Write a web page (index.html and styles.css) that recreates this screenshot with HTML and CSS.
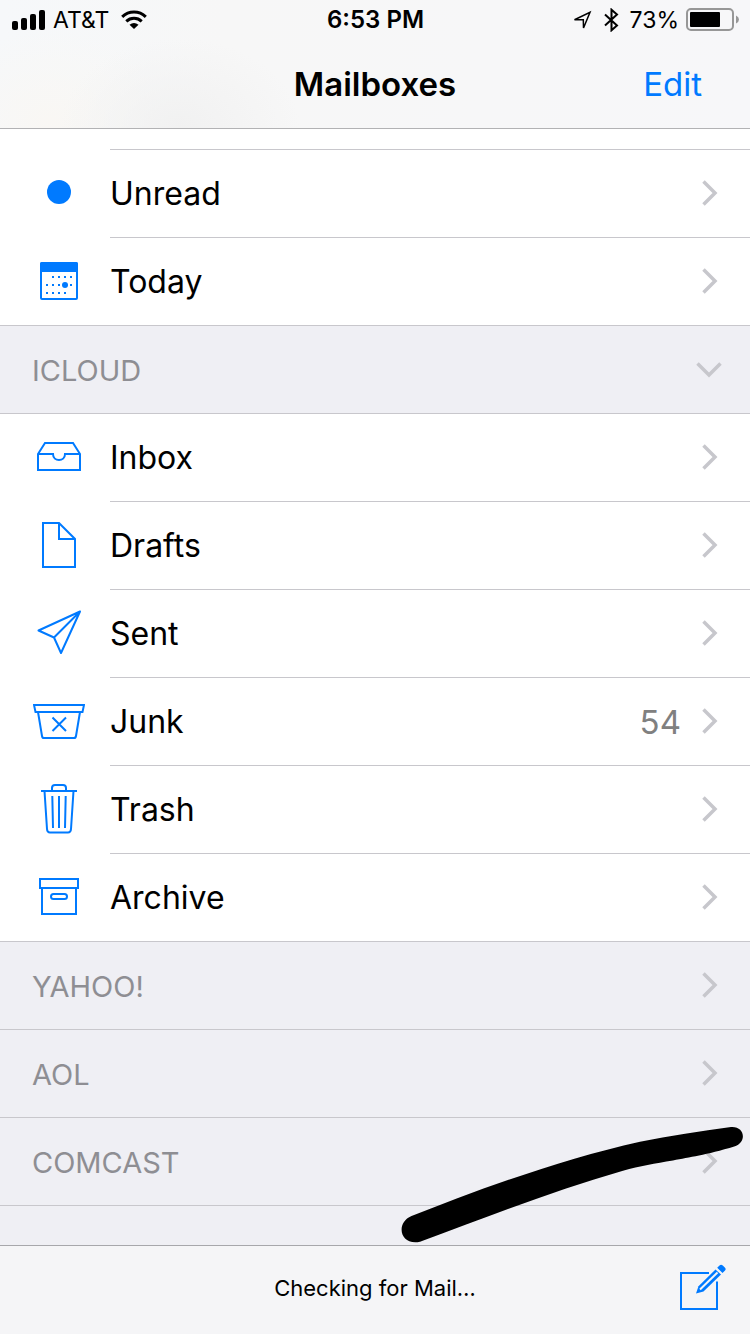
FILE: index.html
```html
<!DOCTYPE html>
<html lang="en">
<head>
<meta charset="utf-8">
<meta name="viewport" content="width=device-width, initial-scale=1">
<title>Mailboxes</title>
<link rel="stylesheet" href="styles.css">
</head>
<body>
<svg class="defs" aria-hidden="true">
  <symbol id="chevron" viewBox="0 0 26 26"><path d="M7.500 1.500 19 13 7.500 24.500"/></symbol>
</svg>
<header class="top">
  <div class="status">
    <div class="status-left">
      <svg class="signal" width="34" height="20" viewBox="0 0 34 20" role="img" aria-label="Signal"><rect y="11" width="6" height="9" rx="2"/><rect x="9" y="8" width="6" height="12" rx="2"/><rect x="18" y="4" width="6" height="16" rx="2"/><rect x="27" width="6" height="20" rx="2"/></svg>
      <span class="carrier">AT&amp;T</span>
      <svg class="wifi" width="26" height="20" viewBox="0 0 26 20" role="img" aria-label="Wi-Fi"><path class="arc" d="M1.200 6.800a17 17 0 0 1 23.600 0M5.300 11.300a11.200 11.200 0 0 1 15.400 0"/><path d="M8.500 14.800Q13 11.300 17.500 14.800L13 19z"/></svg>
    </div>
    <time class="clock">6:53 PM</time>
    <div class="status-right">
      <svg width="20" height="22" viewBox="0 0 20 22" role="img" aria-label="Location"><path class="line fine" d="M2.500 10.700 18 3.300 11.500 19 11.300 10.700z"/></svg>
      <svg class="bluetooth" width="16" height="24" viewBox="0 0 16 24" role="img" aria-label="Bluetooth"><path class="line" d="m2 6.500 12 11-5.500 4.800V1.700L14 6.500l-12 11"/></svg>
      <span>73%</span>
      <svg class="battery" width="53" height="24" viewBox="0 0 53 24" role="img" aria-label="Battery"><rect class="shell" x="1" y="1" width="46" height="21" rx="4"/><rect x="4" y="4" width="30" height="15" rx="1"/><path class="nub" d="M50 7.500q3 1.500 3 4t-3 4z"/></svg>
    </div>
  </div>
  <div class="nav">
    <h1 class="title">Mailboxes</h1>
    <button class="edit" type="button">Edit</button>
  </div>
</header>
<main class="list">
  <div class="peek"></div>
  <a class="row" href="#unread">
    <svg class="icon" viewBox="0 0 52 51"><circle class="solid" cx="26" cy="24" r="12"/></svg>
    <span class="cell"><span class="label">Unread</span><svg class="chevron"><use href="#chevron"/></svg></span>
  </a>
  <a class="row" href="#today">
    <svg class="icon" viewBox="0 0 52 51"><rect x="8" y="7" width="36" height="36" rx="1"/><path class="solid" d="M7 8q0-2 2-2h34q2 0 2 2v9.500q-1-1.500-2-1.500H9q-1 0-2 1.500z"/><path class="dots" d="M19 21h20M13 29h26M13 37h20"/><circle class="solid" cx="32" cy="29" r="3"/></svg>
    <span class="cell"><span class="label">Today</span><svg class="chevron"><use href="#chevron"/></svg></span>
  </a>
  <button class="section" type="button" aria-expanded="true"><span class="name">ICLOUD</span><svg class="chevron down"><use href="#chevron"/></svg></button>
  <a class="row first" href="#inbox">
    <svg class="icon" viewBox="0 0 52 51"><path d="M5 22 12 11h28l7 11v16H5z"/><path d="M5 22h15c0 8 12 8 12 0h15"/></svg>
    <span class="cell"><span class="label">Inbox</span><svg class="chevron"><use href="#chevron"/></svg></span>
  </a>
  <a class="row" href="#drafts">
    <svg class="icon" viewBox="0 0 52 51"><path d="M10 3h16l16 16v28H10zM26 3v16h16"/></svg>
    <span class="cell"><span class="label">Drafts</span><svg class="chevron"><use href="#chevron"/></svg></span>
  </a>
  <a class="row" href="#sent">
    <svg class="icon" viewBox="0 0 52 51"><path class="thin" d="M47 3.500 5.500 22.500 21 29.500 28 45zL21 29.500"/></svg>
    <span class="cell"><span class="label">Sent</span><svg class="chevron"><use href="#chevron"/></svg></span>
  </a>
  <a class="row" href="#junk">
    <svg class="icon" viewBox="0 0 52 51"><path d="M1 9h50l-1.500 7h-47zM5 16l4 24q.3 2 2 2h30q1.700 0 2-2l4-24M19.500 21.500 33 35M33 21.500 19.500 35"/></svg>
    <span class="cell"><span class="label">Junk</span><span class="count">54</span><svg class="chevron"><use href="#chevron"/></svg></span>
  </a>
  <a class="row" href="#trash">
    <svg class="icon" viewBox="0 0 52 51"><path d="M8 7h36M19 7V4q0-3 3-3h8q3 0 3 3v3M11.500 7 14 45q.2 3.500 3 3.500h18q2.800 0 3-3.500L40.500 7M19.300 12l.7 32M26 12v32M32.700 12 32 44"/></svg>
    <span class="cell"><span class="label">Trash</span><svg class="chevron"><use href="#chevron"/></svg></span>
  </a>
  <a class="row" href="#archive">
    <svg class="icon" viewBox="0 0 52 51"><path d="M7 7h38v9H7zM9 16v26h34V16"/><rect x="18" y="22" width="16" height="5" rx="2.500"/></svg>
    <span class="cell"><span class="label">Archive</span><svg class="chevron"><use href="#chevron"/></svg></span>
  </a>
  <button class="section" type="button" aria-expanded="false"><span class="name">YAHOO!</span><svg class="chevron"><use href="#chevron"/></svg></button>
  <button class="section" type="button" aria-expanded="false"><span class="name">AOL</span><svg class="chevron"><use href="#chevron"/></svg></button>
  <div class="marked">
    <button class="section" type="button" aria-expanded="false"><span class="name">COMCAST</span><svg class="chevron"><use href="#chevron"/></svg></button>
    <svg class="marker" width="360" height="128" viewBox="0 0 360 128" aria-hidden="true"><path d="M21.500 99 66.700 81.500C130 58 190 38 250 24.700 280 18.500 310 14.500 341 10c14-1 16 15 4 19.300C315 38.500 300 40 283 43.500 265 46.500 250 49 233 53.700 165 73 100 99 30 124.700 10 129 5 106 21.500 99z"/></svg>
  </div>
  <div class="rest"></div>
</main>
<footer class="toolbar">
  <p class="message">Checking for Mail…</p>
  <button class="compose" type="button" aria-label="Compose"><svg width="48" height="52" viewBox="0 0 48 52"><path d="M30 9H2v36h36V17.500"/><path class="solid" d="m17 29.500 2.500-7.200L36.500 5.500l5.500 5-17.500 17z"/><path class="gap" d="m21 25.500 17.500-17"/><path class="solid" d="m38.200 3.800 2.300-2.300q1.500-1.500 3.300 0l2 2q1.700 1.700 0 3.200l-2.300 2.300z"/></svg></button>
</footer>
</body>
</html>
```
FILE: styles.css
```css
* { box-sizing: border-box; }

body {
  margin: 0;
  min-height: 100vh;
  display: flex;
  flex-direction: column;
  background: #efeff4;
  color: #000;
  font-family: Inter, "Liberation Sans", sans-serif;
  font-size: 33px;
  line-height: 40px;
}

button {
  margin: 0;
  padding: 0;
  border: 0;
  background: none;
  color: inherit;
  font: inherit;
  cursor: pointer;
}

svg { display: block; flex: none; }
.defs { position: absolute; width: 0; height: 0; }

.top {
  border-bottom: 1px solid #b2b2b4;
  background:
    radial-gradient(ellipse 120px 90px at 180px 128px, #f1f1f1, transparent),
    radial-gradient(ellipse 120px 90px at 50px 120px, #f9f7f4, transparent),
    linear-gradient(90deg, #f6f8fa, #f7f7f7 30%, #f7f7f9);
}

.status {
  display: grid;
  grid-template-columns: 1fr auto 1fr;
  align-items: center;
  height: 40px;
  padding: 0 11px 0 12px;
  font-size: 23px;
}
.status-left, .status-right { display: flex; align-items: center; }
.status-right { justify-content: flex-end; }
.carrier { margin: 0 12px 0 7px; }
.clock { font-size: 24px; font-weight: 600; }
.bluetooth { margin: 0 11px; }
.battery { margin-left: 7px; }
.arc { fill: none; stroke: #000; stroke-width: 3; }
.line { fill: none; stroke: #000; stroke-width: 2; }
.fine { stroke-width: 1.5; }
.shell { fill: none; stroke: #979797; stroke-width: 2; }
.nub { fill: #979797; }

.nav {
  display: grid;
  grid-template-columns: 1fr auto 1fr;
  align-items: center;
  height: 88px;
  padding: 0 48px;
}
.title { grid-column: 2; margin: 0; font-size: 33px; font-weight: 600; }
.edit { justify-self: end; color: #007aff; }

.list { flex: 1; }
.peek { height: 20px; background: #fff; }

.row {
  display: flex;
  align-items: stretch;
  height: 88px;
  padding-left: 33px;
  background: #fff;
  color: inherit;
  text-decoration: none;
}
.icon {
  width: 52px;
  height: 51px;
  margin: 19px 25px 0 0;
  fill: none;
  stroke: #007aff;
  stroke-width: 2;
}
.solid { fill: #007aff; stroke: none; }
.thin { stroke-linejoin: round; }
.dots { stroke-dasharray: 2 4; }
.cell {
  flex: 1;
  display: flex;
  align-items: center;
  padding-right: 28px;
  border-top: 1px solid #c8c7cc;
}
.label { flex: 1; font-size: 32px; }
.count { margin-right: 15px; color: #808080; }
.chevron {
  width: 26px;
  height: 26px;
  margin-bottom: 2px;
  fill: none;
  stroke: #c7c7cc;
  stroke-width: 3.5;
}
.down { transform: rotate(90deg); }

.section {
  display: flex;
  align-items: center;
  width: 100%;
  height: 88px;
  padding: 0 28px 0 32px;
  border-top: 1px solid #c8c7cc;
  color: #8e8e93;
  font-size: 29px;
  text-align: left;
}
.name { flex: 1; padding-top: 2px; }
.first { border-top: 1px solid #c8c7cc; }
.first .icon { margin-top: 18px; }
.first .cell { border-top: 0; }

.marked { position: relative; }
.marker { position: absolute; top: 0; right: 0; pointer-events: none; }
.rest { height: 40px; border-top: 1px solid #c8c7cc; }

.toolbar {
  display: grid;
  grid-template-columns: 1fr auto 1fr;
  align-items: center;
  height: 89px;
  padding: 0 23px;
  border-top: 1px solid #a7a7ab;
  background: #f5f5f7;
}
.message { grid-column: 2; margin: 0; padding-bottom: 4px; font-size: 22px; }
.compose {
  justify-self: end;
  fill: none;
  stroke: #007aff;
  stroke-width: 2;
}
.gap { stroke: #f5f5f7; }
```
